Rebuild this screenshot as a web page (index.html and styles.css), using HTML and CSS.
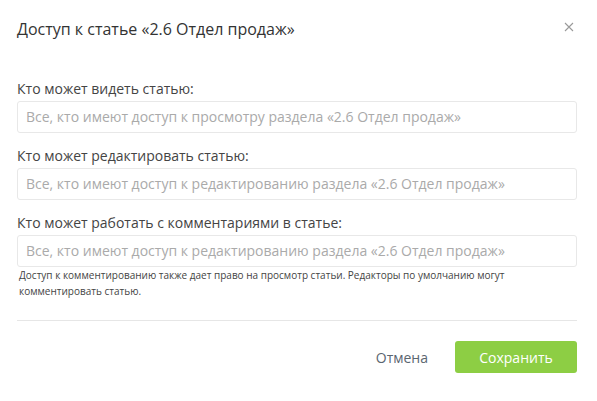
FILE: index.html
```html
<!DOCTYPE html>
<html lang="ru">
<head>
<meta charset="utf-8">
<link rel="stylesheet" href="styles.css">
</head>
<body>
<div class="dialog">
  <div class="header">
    <div class="title">Доступ к статье «2.6 Отдел продаж»</div>
    <button class="close" aria-label="Закрыть">
      <svg width="10" height="10" viewBox="0 0 10 10"><path d="M1 1L9 9M9 1L1 9" stroke="#9a9a9a" stroke-width="1.1" fill="none"/></svg>
    </button>
  </div>
  <div class="body">
    <div class="field">
      <div class="label">Кто может видеть статью:</div>
      <div class="input">Все, кто имеют доступ к просмотру раздела «2.6 Отдел продаж»</div>
    </div>
    <div class="field">
      <div class="label">Кто может редактировать статью:</div>
      <div class="input">Все, кто имеют доступ к редактированию раздела «2.6 Отдел продаж»</div>
    </div>
    <div class="field">
      <div class="label">Кто может работать с комментариями в статье:</div>
      <div class="input">Все, кто имеют доступ к редактированию раздела «2.6 Отдел продаж»</div>
      <div class="hint">Доступ к комментированию также дает право на просмотр статьи. Редакторы по умолчанию могут комментировать статью.</div>
    </div>
  </div>
  <div class="footer">
    <button class="btn-cancel">Отмена</button>
    <button class="btn-save">Сохранить</button>
  </div>
</div>
</body>
</html>
```
FILE: styles.css
```css
html, body {
  margin: 0;
  padding: 0;
  background: #fff;
}
body {
  font-family: "Open Sans", "Noto Sans", sans-serif;
  color: #333;
}
.dialog {
  width: 560px;
  padding: 0 20px 0 17px;
}
.header {
  display: flex;
  align-items: center;
  justify-content: space-between;
  padding-top: 18px;
  height: 22px;
}
.title {
  font-size: 16px;
  line-height: 22px;
  color: #333;
}
.close {
  border: 0;
  background: none;
  padding: 0;
  width: 10px;
  height: 10px;
  margin-right: 3px;
  margin-top: -4px;
  display: flex;
}
.body {
  padding-top: 40px;
}
.field + .field {
  margin-top: 14px;
}
.label {
  font-size: 14px;
  line-height: 18px;
  color: #444;
  margin-bottom: 3px;
}
.input {
  box-sizing: border-box;
  height: 32px;
  border: 1px solid #e8e8e8;
  border-radius: 3px;
  padding: 0 8px;
  font-size: 14px;
  line-height: 30px;
  color: #aaa;
  white-space: nowrap;
}
.hint {
  font-size: 10px;
  line-height: 16px;
  color: #444;
  margin-top: 0;
  padding-left: 2px;
}
.footer {
  margin-top: 21px;
  border-top: 1px solid #e6e6e6;
  padding-top: 20px;
  display: flex;
  justify-content: flex-end;
  align-items: center;
  gap: 0;
}
.btn-cancel {
  border: 0;
  background: none;
  font-family: inherit;
  font-size: 14px;
  color: #5b6670;
  padding: 0 27px 0 0;
  height: 32px;
}
.btn-save {
  border: 0;
  border-radius: 3px;
  background: #8dce44;
  color: #fff;
  font-family: inherit;
  font-size: 14px;
  width: 122px;
  height: 32px;
  padding: 0;
}
```
